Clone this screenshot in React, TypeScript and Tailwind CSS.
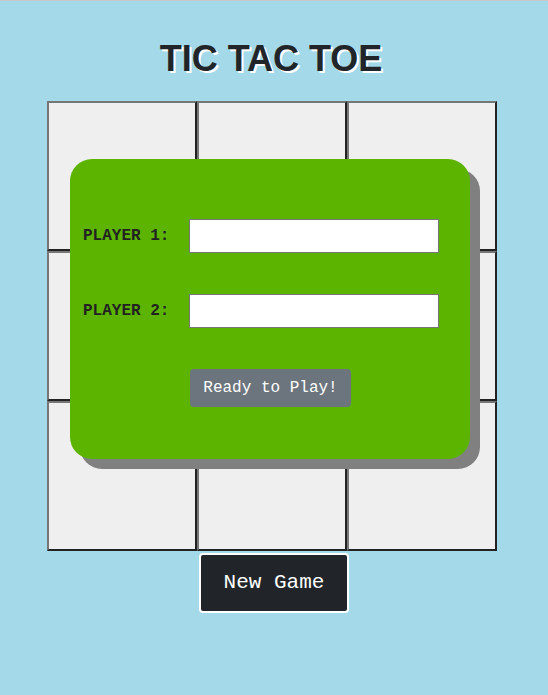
import React, { useState } from 'react';

const mono = { fontFamily: 'Courier, "Courier New", "Liberation Mono", monospace' };

export default function App() {
  const [board, setBoard] = useState<string[]>(Array(9).fill(''));
  const [showModal, setShowModal] = useState(true);
  const [p1, setP1] = useState('');
  const [p2, setP2] = useState('');

  const reset = () => {
    setBoard(Array(9).fill(''));
    setShowModal(true);
  };

  return (
    <div className="min-h-[695px] w-full bg-[#a3d9e9] border-t border-[#c8c8c8] flex flex-col items-center">
      <h1
        className="mt-[31px] mr-[6px] text-[36px] font-bold text-[#212529] [text-shadow:2px_2px_0_#ffffff]"
        style={{ fontFamily: '"Liberation Sans", Arial, sans-serif' }}
      >
        TIC TAC TOE
      </h1>

      <div className="relative mt-[15px] mr-[4px] grid grid-cols-3 w-[450px] h-[450px]">
        {board.map((v, i) => (
          <div
            key={i}
            className="w-[150px] h-[150px] bg-[#efefef] border-2 border-t-[#767676] border-l-[#767676] border-r-[#222222] border-b-[#222222] flex items-center justify-center text-5xl"
            style={mono}
          >
            {v}
          </div>
        ))}

        {showModal && (
          <div className="absolute left-[23px] top-[58px] w-[400px] h-[300px] bg-[#5cb400] rounded-[22px] shadow-[10px_10px_0_#808080] pt-[60px] pl-[13px]">
            <div className="flex items-center">
              <label className="w-[106px] text-[16px] font-bold text-[#222222]" style={mono}>
                PLAYER 1:
              </label>
              <input
                value={p1}
                onChange={e => setP1(e.target.value)}
                className="w-[250px] h-[34px] bg-white border border-[#767676] outline-none px-1"
              />
            </div>
            <div className="flex items-center mt-[41px]">
              <label className="w-[106px] text-[16px] font-bold text-[#222222]" style={mono}>
                PLAYER 2:
              </label>
              <input
                value={p2}
                onChange={e => setP2(e.target.value)}
                className="w-[250px] h-[34px] bg-white border border-[#767676] outline-none px-1"
              />
            </div>
            <button
              onClick={() => setShowModal(false)}
              className="mt-[41px] ml-[107px] w-[161px] h-[38px] rounded-[4px] bg-[#6c757d] text-white text-[16px]"
              style={mono}
            >
              Ready to Play!
            </button>
          </div>
        )}
      </div>

      <button
        onClick={reset}
        className="mt-[2px] w-[150px] h-[60px] bg-[#212529] border-2 border-white rounded-[4px] text-white text-[21px]"
        style={mono}
      >
        New Game
      </button>
    </div>
  );
}
